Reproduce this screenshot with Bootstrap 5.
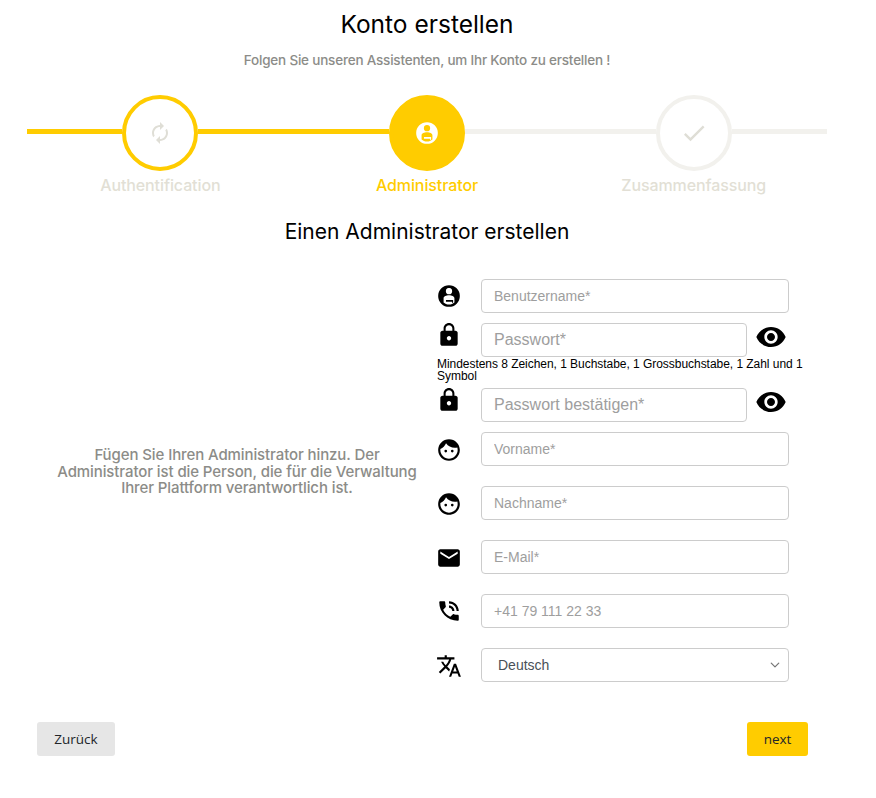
<!DOCTYPE html>
<html lang="de">
<head>
    <meta charset="utf-8" />
    <title>Konto erstellen</title>
    <meta name="viewport" content="width=device-width, initial-scale=1" />
    <link href="https://cdn.jsdelivr.net/npm/bootstrap@5.3.2/dist/css/bootstrap.min.css" rel="stylesheet">
    <style>
        body {
            font-family: Inter, "Liberation Sans", sans-serif;
            background: #fff;
            color: #000;
        }

        .wizard {
            width: 800px;
            margin-left: 27px;
            padding-top: 10px;
        }

        .wizard-title {
            font-size: 24.5px;
            line-height: 29px;
            font-weight: 400;
            margin: 0 0 11px;
        }

        .wizard-sub {
            font-size: 13.5px;
            line-height: 20px;
            color: #8c8c88;
            font-weight: 500;
            letter-spacing: -.2px;
            margin: 0 0 25px;
        }

        .step-item {
            width: 33.3333%;
        }

        .step-line {
            height: 5px;
            flex: 1 1 0;
            margin-top: -4px;
            background: #f2f1ed;
        }

        .step-line.is-on {
            background: #ffcc00;
        }

        .step-circle {
            width: 76px;
            height: 76px;
            flex: none;
            border: 4px solid #f2f1ed;
            border-radius: 50%;
            fill: #dfded6;
        }

        .step-circle.is-done {
            border-color: #ffcc00;
        }

        .step-circle.is-active {
            border-color: #ffcc00;
            background: #ffcc00;
        }

        .step-label {
            font-size: 16px;
            line-height: 20px;
            font-weight: 500;
            letter-spacing: -.1px;
            color: #e2dfd5;
            margin-top: 4px;
        }

        .step-label.is-active {
            color: #ffcc00;
        }

        .section-title {
            font-size: 21px;
            line-height: 26px;
            font-weight: 400;
            margin: 24px 0 34px;
        }

        .intro-col {
            width: 400px;
            padding: 0 10px 17px 30px;
            font-size: 15px;
            line-height: 16.5px;
            font-weight: 500;
            letter-spacing: -.1px;
            color: #8c8c88;
        }

        .fields-col {
            width: 400px;
        }

        .field-row {
            height: 34px;
            margin-bottom: 20px;
        }

        .field-row.is-tight {
            margin-bottom: 10px;
        }

        .field-icon {
            width: 44px;
            margin-right: 10px;
            flex: none;
            text-align: center;
            line-height: 0;
        }

        .field-icon.is-low {
            padding-top: 2px;
        }

        .field-icon.is-high {
            padding-bottom: 11px;
        }

        .field-icon svg {
            width: 26px;
            height: 26px;
        }

        .fields-col .form-control,
        .fields-col .form-select {
            width: 308px;
            height: 34px;
            font-family: "Liberation Sans", sans-serif;
            font-size: 14px;
            border-color: #ccc;
            border-radius: 4px;
            color: #495057;
            box-shadow: none;
        }

        .fields-col .form-control.is-pass {
            width: 266px;
            font-size: 16px;
        }

        .fields-col .form-select {
            padding-left: 16px;
            background-image: url("data:image/svg+xml,%3csvg xmlns='http://www.w3.org/2000/svg' viewBox='0 0 16 16'%3e%3cpath fill='none' stroke='%23777' stroke-linecap='round' stroke-linejoin='round' stroke-width='2' d='m2 5 6 6 6-6'/%3e%3c/svg%3e");
            background-position: right 8px center;
            background-size: 10px 10px;
        }

        .fields-col .form-control::placeholder {
            color: #9e9e9e;
        }

        .eye-btn {
            line-height: 0;
            margin-left: 8px;
            padding-bottom: 6px;
        }

        .eye-btn svg {
            width: 32px;
            height: 32px;
        }

        .pass-hint {
            font-family: "Liberation Sans", sans-serif;
            font-size: 12px;
            line-height: 12px;
            letter-spacing: -.04px;
            width: 372px;
            margin: 1px 0 6px 10px;
        }

        .wizard-actions {
            width: 771px;
            margin: 40px 0 0 10px;
        }

        .btn-back,
        .btn-next {
            font-family: "Open Sans", sans-serif;
            font-size: 13.5px;
            line-height: 20px;
            height: 34px;
            padding: 6px 0;
            color: #212529;
            border: 0;
            border-radius: 3px;
        }

        .btn-back {
            width: 78px;
            background: #e6e6e6;
        }

        .btn-next {
            width: 61px;
            background: #ffcc00;
        }
    </style>
</head>
<body>
    <div class="wizard">
        <h1 class="wizard-title text-center">Konto erstellen</h1>
        <p class="wizard-sub text-center">Folgen Sie unseren Assistenten, um Ihr Konto zu erstellen !</p>

        <div class="d-flex">
            <div class="step-item d-flex flex-column align-items-center">
                <div class="d-flex align-items-center w-100">
                    <div class="step-line is-on"></div>
                    <div class="step-circle is-done d-flex align-items-center justify-content-center">
                        <svg width="24" height="24" viewBox="0 0 24 24"><path d="M12 6v3l4-4-4-4v3c-4.42 0-8 3.58-8 8 0 1.57.46 3.03 1.24 4.26L6.7 14.8c-.45-.83-.7-1.79-.7-2.8 0-3.31 2.69-6 6-6zm6.76 1.74L17.3 9.2c.44.84.7 1.79.7 2.8 0 3.31-2.69 6-6 6v-3l-4 4 4 4v-3c4.42 0 8-3.58 8-8 0-1.57-.46-3.03-1.24-4.26z"/></svg>
                    </div>
                    <div class="step-line is-on"></div>
                </div>
                <div class="step-label">Authentification</div>
            </div>
            <div class="step-item d-flex flex-column align-items-center">
                <div class="d-flex align-items-center w-100">
                    <div class="step-line is-on"></div>
                    <div class="step-circle is-active d-flex align-items-center justify-content-center">
                        <svg width="26" height="26" viewBox="0 0 24 24"><path fill="#fff" fill-rule="evenodd" d="M12 2a10 10 0 1 0 0 20 10 10 0 0 0 0-20zm0 2.6a2.9 2.9 0 1 1 0 5.8 2.9 2.9 0 0 1 0-5.8zM7 14c0-1.9 2.4-2.8 5-2.8s5 .9 5 2.8v4c-1.3 1.2-3 1.9-5 1.9s-3.7-.7-5-1.9zm2.2 1.8v1.6h5.6v1.1l1-.6v-2.1z"/></svg>
                    </div>
                    <div class="step-line"></div>
                </div>
                <div class="step-label is-active">Administrator</div>
            </div>
            <div class="step-item d-flex flex-column align-items-center">
                <div class="d-flex align-items-center w-100">
                    <div class="step-line"></div>
                    <div class="step-circle d-flex align-items-center justify-content-center">
                        <svg width="28" height="28" viewBox="0 0 24 24"><path d="M9 16.17L4.83 12l-1.42 1.41L9 19 21 7l-1.41-1.41z"/></svg>
                    </div>
                    <div class="step-line"></div>
                </div>
                <div class="step-label">Zusammenfassung</div>
            </div>
        </div>

        <h2 class="section-title text-center">Einen Administrator erstellen</h2>

        <div class="d-flex align-items-center">
            <div class="intro-col text-center">Fügen Sie Ihren Administrator hinzu. Der Administrator ist die Person, die für die Verwaltung Ihrer Plattform verantwortlich ist.</div>
            <div class="fields-col">
                <div class="field-row is-tight d-flex align-items-center">
                    <div class="field-icon"><svg viewBox="0 0 24 24"><path fill-rule="evenodd" d="M12 2a10 10 0 1 0 0 20 10 10 0 0 0 0-20zm0 2.6a2.9 2.9 0 1 1 0 5.8 2.9 2.9 0 0 1 0-5.8zM7 14c0-1.9 2.4-2.8 5-2.8s5 .9 5 2.8v4c-1.3 1.2-3 1.9-5 1.9s-3.7-.7-5-1.9zm2.2 1.8v1.6h5.6v1.1l1-.6v-2.1z"/></svg></div>
                    <input class="form-control" type="text" placeholder="Benutzername*">
                </div>
                <div class="field-row mb-0 d-flex align-items-center">
                    <div class="field-icon is-high"><svg viewBox="0 0 24 24"><path d="M18 8h-1V6c0-2.76-2.24-5-5-5S7 3.24 7 6v2H6c-1.1 0-2 .9-2 2v10c0 1.1.9 2 2 2h12c1.1 0 2-.9 2-2V10c0-1.1-.9-2-2-2zm-6 9c-1.1 0-2-.9-2-2s.9-2 2-2 2 .9 2 2-.9 2-2 2zm3.1-9H8.9V6c0-1.71 1.39-3.1 3.1-3.1 1.71 0 3.1 1.39 3.1 3.1v2z"/></svg></div>
                    <input class="form-control is-pass" type="password" placeholder="Passwort*">
                    <div class="eye-btn"><svg viewBox="0 0 24 24"><path d="M12 4.5C7 4.5 2.73 7.61 1 12c1.73 4.39 6 7.5 11 7.5s9.27-3.11 11-7.5c-1.73-4.39-6-7.5-11-7.5zM12 17c-2.76 0-5-2.24-5-5s2.24-5 5-5 5 2.24 5 5-2.24 5-5 5zm0-8c-1.66 0-3 1.34-3 3s1.34 3 3 3 3-1.34 3-3-1.34-3-3-3z"/></svg></div>
                </div>
                <div class="pass-hint">Mindestens 8 Zeichen, 1 Buchstabe, 1 Grossbuchstabe, 1 Zahl und 1 Symbol</div>
                <div class="field-row is-tight d-flex align-items-center">
                    <div class="field-icon is-high"><svg viewBox="0 0 24 24"><path d="M18 8h-1V6c0-2.76-2.24-5-5-5S7 3.24 7 6v2H6c-1.1 0-2 .9-2 2v10c0 1.1.9 2 2 2h12c1.1 0 2-.9 2-2V10c0-1.1-.9-2-2-2zm-6 9c-1.1 0-2-.9-2-2s.9-2 2-2 2 .9 2 2-.9 2-2 2zm3.1-9H8.9V6c0-1.71 1.39-3.1 3.1-3.1 1.71 0 3.1 1.39 3.1 3.1v2z"/></svg></div>
                    <input class="form-control is-pass" type="password" placeholder="Passwort bestätigen*">
                    <div class="eye-btn"><svg viewBox="0 0 24 24"><path d="M12 4.5C7 4.5 2.73 7.61 1 12c1.73 4.39 6 7.5 11 7.5s9.27-3.11 11-7.5c-1.73-4.39-6-7.5-11-7.5zM12 17c-2.76 0-5-2.24-5-5s2.24-5 5-5 5 2.24 5 5-2.24 5-5 5zm0-8c-1.66 0-3 1.34-3 3s1.34 3 3 3 3-1.34 3-3-1.34-3-3-3z"/></svg></div>
                </div>
                <div class="field-row d-flex align-items-center">
                    <div class="field-icon is-low"><svg viewBox="0 0 24 24"><path d="M12 2C6.48 2 2 6.48 2 12s4.48 10 10 10 10-4.48 10-10S17.52 2 12 2zm0 18c-4.41 0-8-3.59-8-8 0-.29.02-.58.05-.86 2.36-1.05 4.23-2.98 5.21-5.37C11.07 8.33 14.05 10 17.42 10c.78 0 1.53-.09 2.25-.26.21.71.33 1.47.33 2.26 0 4.41-3.59 8-8 8z"/><circle cx="9" cy="13" r="1.25"/><circle cx="15" cy="13" r="1.25"/></svg></div>
                    <input class="form-control" type="text" placeholder="Vorname*">
                </div>
                <div class="field-row d-flex align-items-center">
                    <div class="field-icon is-low"><svg viewBox="0 0 24 24"><path d="M12 2C6.48 2 2 6.48 2 12s4.48 10 10 10 10-4.48 10-10S17.52 2 12 2zm0 18c-4.41 0-8-3.59-8-8 0-.29.02-.58.05-.86 2.36-1.05 4.23-2.98 5.21-5.37C11.07 8.33 14.05 10 17.42 10c.78 0 1.53-.09 2.25-.26.21.71.33 1.47.33 2.26 0 4.41-3.59 8-8 8z"/><circle cx="9" cy="13" r="1.25"/><circle cx="15" cy="13" r="1.25"/></svg></div>
                    <input class="form-control" type="text" placeholder="Nachname*">
                </div>
                <div class="field-row d-flex align-items-center">
                    <div class="field-icon is-low"><svg viewBox="0 0 24 24"><path d="M20 4H4c-1.1 0-1.99.9-1.99 2L2 18c0 1.1.9 2 2 2h16c1.1 0 2-.9 2-2V6c0-1.1-.9-2-2-2zm0 4l-8 5-8-5V6l8 5 8-5v2z"/></svg></div>
                    <input class="form-control" type="email" placeholder="E-Mail*">
                </div>
                <div class="field-row d-flex align-items-center">
                    <div class="field-icon"><svg viewBox="0 0 24 24"><path d="M20 15.5c-1.25 0-2.45-.2-3.57-.57-.35-.11-.74-.03-1.02.24l-2.2 2.2c-2.83-1.44-5.15-3.75-6.59-6.59l2.2-2.21c.28-.26.36-.65.25-1C8.7 6.45 8.5 5.25 8.5 4c0-.55-.45-1-1-1H4c-.55 0-1 .45-1 1 0 9.39 7.61 17 17 17 .55 0 1-.45 1-1v-3.5c0-.55-.45-1-1-1zM19 12h2c0-4.97-4.03-9-9-9v2c3.87 0 7 3.13 7 7zm-4 0h2c0-2.76-2.24-5-5-5v2c1.66 0 3 1.34 3 3z"/></svg></div>
                    <input class="form-control" type="tel" placeholder="+41 79 111 22 33">
                </div>
                <div class="field-row mb-0 d-flex align-items-center">
                    <div class="field-icon is-low"><svg viewBox="0 0 24 24"><path d="M12.87 15.07l-2.54-2.51.03-.03c1.74-1.94 2.98-4.17 3.71-6.53H17V4h-7V2H8v2H1v1.99h11.17C11.5 7.92 10.44 9.75 9 11.35 8.07 10.32 7.3 9.19 6.69 8h-2c.73 1.63 1.73 3.17 2.98 4.56l-5.09 5.02L4 19l5-5 3.11 3.11.76-2.04zM18.5 10h-2L12 22h2l1.12-3h4.75L21 22h2l-4.5-12zm-2.62 7l1.62-4.33L19.12 17h-3.24z"/></svg></div>
                    <select class="form-select">
                        <option selected>Deutsch</option>
                        <option>Français</option>
                        <option>English</option>
                    </select>
                </div>
            </div>
        </div>

        <div class="wizard-actions d-flex justify-content-between">
            <button type="button" class="btn btn-back">Zurück</button>
            <button type="button" class="btn btn-next">next</button>
        </div>
    </div>

    <script src="https://cdn.jsdelivr.net/npm/bootstrap@5.3.2/dist/js/bootstrap.bundle.min.js"></script>
</body>
</html>
